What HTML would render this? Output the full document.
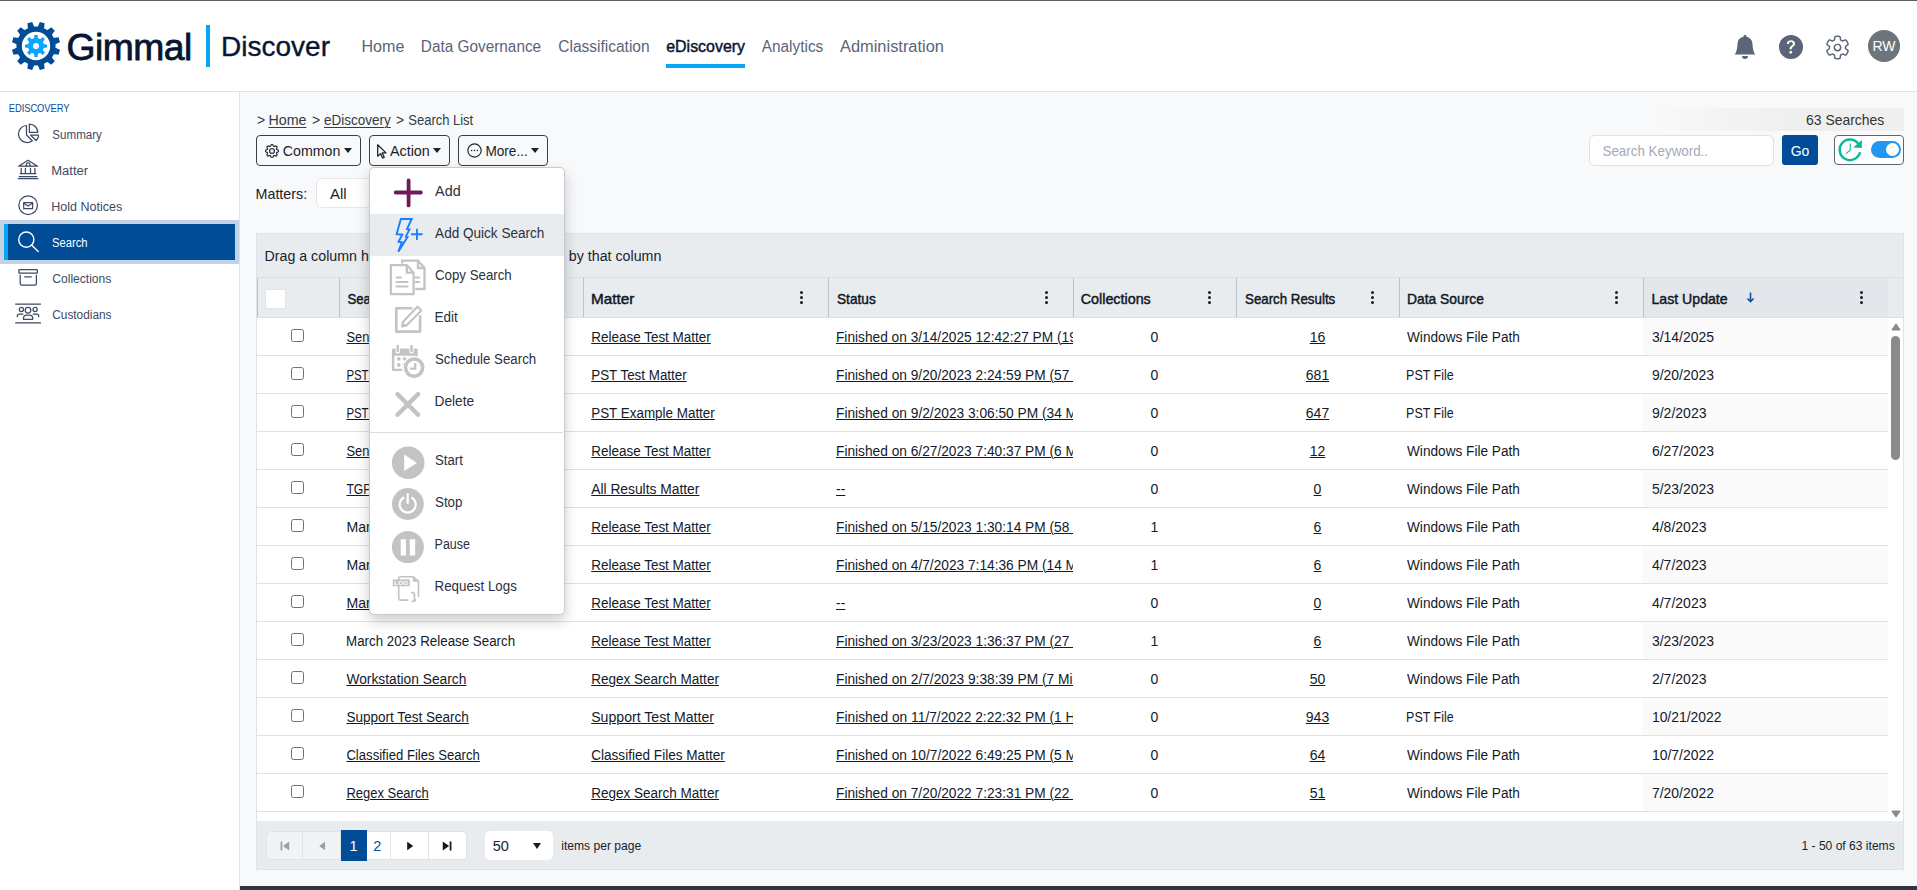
<!DOCTYPE html>
<html lang="en">
<head>
<meta charset="utf-8">
<title>Gimmal Discover - Search List</title>
<style>
*{box-sizing:border-box;}
html,body{margin:0;padding:0;}
body{width:1917px;height:890px;overflow:hidden;position:relative;background:#f8f9fa;font-family:"Liberation Sans","DejaVu Sans",sans-serif;color:#212529;font-size:14px;}
a{color:inherit;text-underline-offset:2px;text-decoration-thickness:1px;}
.abs{position:absolute;}
/* header */
#hdr{position:absolute;left:0;top:0;width:1917px;height:92px;background:#fff;border-top:1px solid #625a69;border-bottom:1px solid #dfe3e8;}
#gimmal{position:absolute;left:66px;top:22.9px;font-size:37.4px;line-height:48px;color:#081530;letter-spacing:-0.5px;-webkit-text-stroke:0.8px #081530;}
#bar{position:absolute;left:206px;top:25px;width:4px;height:42px;background:#0aa5f7;}
#discover{position:absolute;left:222px;top:28.8px;font-size:27px;line-height:36px;color:#0a1533;-webkit-text-stroke:0.35px #0a1533;}
.nav{position:absolute;top:37.4px;font-size:16px;line-height:20px;color:#5b6478;white-space:nowrap;}
.nav.act{color:#0a1533;-webkit-text-stroke:0.45px #0a1533;}
#navul{position:absolute;left:666px;top:64px;width:79px;height:4px;background:#0aa5f7;}
#avatar{position:absolute;left:1868px;top:30px;width:32px;height:32px;border-radius:16px;background:#6c757d;color:#fff;font-size:14px;line-height:32px;text-align:center;}
/* sidebar */
#side{position:absolute;left:0;top:92px;width:240px;height:798px;background:#fff;border-right:1px solid #dfe3e8;}
#side .ttl{position:absolute;left:8px;top:8.8px;font-size:11px;line-height:14px;color:#0b4d96;letter-spacing:-0.1px;}
.si{position:absolute;left:0;width:239px;height:36px;}
.si span{position:absolute;left:52px;top:11px;font-size:12.5px;line-height:16px;color:#3d4a63;white-space:nowrap;}
.si svg{position:absolute;left:17px;top:7px;width:22px;height:22px;}
#selo{position:absolute;left:0;top:128px;width:239px;height:44px;background:#c3d2e4;}
#seli{position:absolute;left:4px;top:132px;width:231px;height:36px;background:#004c97;border-left:4px solid #0aa5f7;}
/* main */
.bc{position:absolute;top:112px;font-size:14px;line-height:16px;color:#333b48;white-space:nowrap;}
.btn{position:absolute;top:135px;height:31px;border:1px solid #3a3f47;border-radius:4px;background:#f8f9fa;}
.btn span{position:absolute;top:6px;font-size:14px;line-height:18px;color:#1b212b;white-space:nowrap;}
.caret{position:absolute;top:12px;width:0;height:0;border-left:4px solid transparent;border-right:4px solid transparent;border-top:5px solid #1b212b;}
#cnt{position:absolute;left:1653px;top:108px;width:251px;height:23px;background:linear-gradient(90deg,rgba(239,239,239,0),#efefef 55%);}
#cnt span{position:absolute;right:20px;top:3px;font-size:15px;line-height:18px;color:#333;white-space:nowrap;}
#kw{position:absolute;left:1589px;top:135px;width:185px;height:31px;border:1px solid #dee2e6;border-radius:6px;background:#fff;}
#kw span{position:absolute;left:12px;top:7px;font-size:15px;line-height:16px;color:#a4abb5;white-space:nowrap;}
#go{position:absolute;left:1782px;top:135px;width:36px;height:30px;border-radius:3px;background:#004c97;color:#fff;font-size:14px;line-height:32px;text-align:center;}
#tg{position:absolute;left:1834px;top:135px;width:70px;height:30px;border:1px solid #5c6470;border-radius:4px;background:#fff;}
#sw{position:absolute;left:36px;top:5px;width:30px;height:17px;border-radius:8.5px;background:#2196f3;}
#sw i{position:absolute;right:1.8px;top:1.8px;width:13.4px;height:13.4px;border-radius:7px;background:#fff;}
#ml{position:absolute;left:256px;top:184.8px;font-size:15px;line-height:18px;color:#1b212b;}
#mdd{position:absolute;left:316px;top:178px;width:230px;height:30px;border:1px solid #e3e6ea;border-radius:6px;background:#fff;}
#mdd span{position:absolute;left:13px;top:6px;font-size:15px;line-height:18px;color:#1b212b;}
/* grid */
#grid{position:absolute;left:256px;top:233px;width:1648px;height:637px;background:#fff;border:1px solid #dfe2e6;}
#gp{position:absolute;left:0;top:0;width:1646px;height:44px;background:#e9ecef;border-bottom:1px solid #dcdfe3;}
#gp span{position:absolute;left:8px;top:13px;font-size:14px;line-height:18px;color:#1b212b;white-space:nowrap;}
#gh{position:absolute;left:0;top:44px;width:1646px;height:40px;background:#e9ecef;border-bottom:1px solid #dcdfe3;}
.th{position:absolute;top:0;height:39px;border-left:1px solid #bbc2cc;}
.th b{position:absolute;left:8px;top:12px;font-size:14.5px;line-height:18px;color:#0f1826;white-space:nowrap;font-weight:normal;-webkit-text-stroke:0.45px #0f1826;}
.kb{position:absolute;top:13px;width:4px;height:14px;}
.kb i{position:absolute;left:0;width:3px;height:3px;border-radius:2px;background:#161c26;}
#rows{position:absolute;left:0;top:84px;width:1631px;height:503px;overflow:hidden;}
.r{position:absolute;left:0;width:1631px;height:38px;border-bottom:1px solid #dfe2e6;background:#fff;}
.r .c{position:absolute;top:0;height:37px;overflow:hidden;white-space:nowrap;font-size:14px;line-height:18px;padding-top:10px;color:#121a2b;}
.r .c a,.r .c span{display:inline-block;}
.r .c a{text-decoration:underline;text-underline-offset:1.3px;text-decoration-thickness:1px;}
.r.alt .c7{background:#fafafa;}
.cb{position:absolute;left:34px;top:11px;width:13px;height:13px;border:1px solid #6e7178;border-radius:2.5px;background:#fff;}
.c1{left:82px;width:244px;padding-left:8px;}
.c2{left:326px;width:245px;padding-left:8px;}
.c3{left:571px;width:245px;padding-left:8px;}
.c4{left:816px;width:163px;text-align:center;}
.c5{left:979px;width:163px;text-align:center;}
.c6{left:1142px;width:244px;padding-left:8px;}
.c7{left:1386px;width:245px;padding-left:8px;}
#sb{position:absolute;left:1631px;top:84px;width:15px;height:503px;background:#fff;}
#sb .t{position:absolute;left:3px;top:18px;width:9px;height:124px;border-radius:4.5px;background:#8b8b8b;}
#sb svg{position:absolute;left:2.5px;width:10px;height:8px;}

#pg{position:absolute;left:0;top:587px;width:1646px;height:48px;background:#e9ecef;}
.pb{position:absolute;top:9px;height:30px;background:#fff;border-right:1px solid #dfe2e6;}
.pb.dis{background:#f1f3f5;}
#pg .t{position:absolute;font-size:13.5px;line-height:18px;color:#1b212b;white-space:nowrap;}
/* menu */
#menu{position:absolute;left:368.6px;top:166.6px;width:196.2px;height:448.2px;background:#fff;border:1px solid #c6c9cd;border-radius:5px;box-shadow:0 6px 14px rgba(0,0,0,.20);}
.mi{position:absolute;left:0;width:194.2px;height:42px;}
.mi span{position:absolute;left:64px;top:10px;font-size:14px;line-height:18px;color:#2a3140;white-space:nowrap;}
.mi svg{position:absolute;}
#foot{position:absolute;left:240px;top:886px;width:1677px;height:4px;background:#31353d;}
#hcb{position:absolute;left:7.3px;top:10.6px;width:20.4px;height:20.4px;border:1px solid #e0e3e7;border-radius:2px;background:#fff;}
</style>
</head>
<body>
<div id="hdr"></div>
<svg id="logo" viewBox="-25 -25 50 50" style="position:absolute;left:11px;top:21px;width:50px;height:50px"><g fill="#004c97"><path transform="rotate(15)" d="M-3.3 -18.5L-2.5 -24.1H2.5L3.3 -18.5z"/><path transform="rotate(45)" d="M-3.3 -18.5L-2.5 -24.1H2.5L3.3 -18.5z"/><path transform="rotate(75)" d="M-3.3 -18.5L-2.5 -24.1H2.5L3.3 -18.5z"/><path transform="rotate(105)" d="M-3.3 -18.5L-2.5 -24.1H2.5L3.3 -18.5z"/><path transform="rotate(135)" d="M-3.3 -18.5L-2.5 -24.1H2.5L3.3 -18.5z"/><path transform="rotate(165)" d="M-3.3 -18.5L-2.5 -24.1H2.5L3.3 -18.5z"/><path transform="rotate(195)" d="M-3.3 -18.5L-2.5 -24.1H2.5L3.3 -18.5z"/><path transform="rotate(225)" d="M-3.3 -18.5L-2.5 -24.1H2.5L3.3 -18.5z"/><path transform="rotate(255)" d="M-3.3 -18.5L-2.5 -24.1H2.5L3.3 -18.5z"/><path transform="rotate(285)" d="M-3.3 -18.5L-2.5 -24.1H2.5L3.3 -18.5z"/><path transform="rotate(315)" d="M-3.3 -18.5L-2.5 -24.1H2.5L3.3 -18.5z"/><path transform="rotate(345)" d="M-3.3 -18.5L-2.5 -24.1H2.5L3.3 -18.5z"/></g><circle r="16.9" fill="none" stroke="#004c97" stroke-width="5.4"/><g fill="#0aa5ff"><path transform="rotate(0)" d="M-2 -7L-1.6 -11H1.6L2 -7z"/><path transform="rotate(45)" d="M-2 -7L-1.6 -11H1.6L2 -7z"/><path transform="rotate(90)" d="M-2 -7L-1.6 -11H1.6L2 -7z"/><path transform="rotate(135)" d="M-2 -7L-1.6 -11H1.6L2 -7z"/><path transform="rotate(180)" d="M-2 -7L-1.6 -11H1.6L2 -7z"/><path transform="rotate(225)" d="M-2 -7L-1.6 -11H1.6L2 -7z"/><path transform="rotate(270)" d="M-2 -7L-1.6 -11H1.6L2 -7z"/><path transform="rotate(315)" d="M-2 -7L-1.6 -11H1.6L2 -7z"/></g><circle r="5.5" fill="none" stroke="#0aa5ff" stroke-width="5"/></svg>
<div id="gimmal" style="transform:translateX(0.50px) scaleX(0.9961);transform-origin:0 0;">Gimmal</div>
<div id="bar"></div>
<div id="discover" style="transform:translateX(-1.08px) scaleX(1.0385);transform-origin:0 0;">Discover</div>
<div class="nav" style="left:362px;transform:translateX(-0.51px) scaleX(1.0052);transform-origin:0 0;">Home</div>
<div class="nav" style="left:421px;transform:translateX(-0.21px) scaleX(0.9598);transform-origin:0 0;">Data Governance</div>
<div class="nav" style="left:558px;transform:translateX(0.25px) scaleX(0.9694);transform-origin:0 0;">Classification</div>
<div class="nav act" style="left:666px;transform:translateX(0.25px) scaleX(0.9952);transform-origin:0 0;">eDiscovery</div>
<div class="nav" style="left:761px;transform:translateX(0.75px) scaleX(0.9606);transform-origin:0 0;">Analytics</div>
<div class="nav" style="left:840px;transform:translateX(0.00px) scaleX(1.0251);transform-origin:0 0;">Administration</div>
<div id="navul"></div>
<svg viewBox="0 0 16 16" style="position:absolute;left:1733px;top:35px;width:24px;height:24px" fill="#5b6478"><path d="M8 16a2 2 0 0 0 2-2H6a2 2 0 0 0 2 2zm.995-14.901a1 1 0 1 0-1.99 0A5.002 5.002 0 0 0 3 6c0 1.098-.5 6-2 7h14c-1.5-1-2-5.902-2-7 0-2.42-1.72-4.44-4.005-4.901z"/></svg>
<svg viewBox="0 0 16 16" style="position:absolute;left:1779px;top:35px;width:24px;height:24px" fill="#5b6478"><path d="M16 8A8 8 0 1 1 0 8a8 8 0 0 1 16 0zM5.496 6.033h.825c.138 0 .248-.113.266-.25.09-.656.54-1.134 1.342-1.134.686 0 1.314.343 1.314 1.168 0 .635-.374.927-.965 1.371-.673.489-1.206 1.06-1.168 1.987l.003.217a.25.25 0 0 0 .25.246h.811a.25.25 0 0 0 .25-.25v-.105c0-.718.273-.927 1.01-1.486.609-.463 1.244-.977 1.244-2.056 0-1.511-1.276-2.241-2.673-2.241-1.267 0-2.655.59-2.75 2.286a.237.237 0 0 0 .241.247zm2.325 6.443c.61 0 1.029-.394 1.029-.927 0-.552-.42-.94-1.029-.94-.584 0-1.009.388-1.009.94 0 .533.425.927 1.01.927z"/></svg>
<svg viewBox="-12.5 -12.5 25 25" style="position:absolute;left:1824.5px;top:34.8px;width:25px;height:25px" fill="none" stroke="#5b6478" stroke-width="1.45" stroke-linejoin="round"><path d="M8.10 -0.00L8.10 -0.07L8.10 -0.14L8.10 -0.21L8.10 -0.28L8.09 -0.35L8.09 -0.42L8.08 -0.49L8.08 -0.57L8.08 -0.64L8.07 -0.71L8.06 -0.78L8.06 -0.85L8.05 -0.92L8.04 -0.99L8.05 -1.06L8.09 -1.14L8.15 -1.22L8.25 -1.31L8.36 -1.40L8.49 -1.50L8.64 -1.60L8.80 -1.71L8.97 -1.82L9.14 -1.94L9.32 -2.07L9.50 -2.19L9.68 -2.32L9.85 -2.45L10.01 -2.59L10.16 -2.72L10.29 -2.85L10.40 -2.98L10.50 -3.11L10.57 -3.23L10.62 -3.35L10.64 -3.46L10.62 -3.55L10.59 -3.65L10.56 -3.74L10.52 -3.83L10.49 -3.92L10.46 -4.01L10.42 -4.10L10.38 -4.20L10.35 -4.29L10.31 -4.38L10.27 -4.47L10.23 -4.56L10.19 -4.64L10.15 -4.73L10.11 -4.82L10.07 -4.91L10.02 -5.00L9.98 -5.08L9.93 -5.17L9.89 -5.26L9.84 -5.34L9.80 -5.43L9.75 -5.52L9.70 -5.60L9.65 -5.68L9.60 -5.77L9.55 -5.85L9.50 -5.94L9.45 -6.02L9.39 -6.10L9.34 -6.18L9.29 -6.26L9.23 -6.34L9.17 -6.42L9.12 -6.50L9.06 -6.58L9.00 -6.66L8.94 -6.74L8.89 -6.82L8.83 -6.90L8.77 -6.97L8.70 -7.05L8.64 -7.12L8.58 -7.20L8.52 -7.27L8.45 -7.35L8.39 -7.42L8.31 -7.48L8.21 -7.52L8.09 -7.54L7.94 -7.54L7.79 -7.52L7.62 -7.48L7.43 -7.43L7.24 -7.37L7.05 -7.30L6.85 -7.22L6.65 -7.13L6.45 -7.04L6.26 -6.95L6.06 -6.85L5.88 -6.77L5.71 -6.68L5.54 -6.61L5.39 -6.54L5.25 -6.49L5.13 -6.45L5.03 -6.44L4.94 -6.44L4.87 -6.47L4.82 -6.51L4.76 -6.55L4.70 -6.59L4.65 -6.64L4.59 -6.68L4.53 -6.72L4.47 -6.75L4.41 -6.79L4.35 -6.83L4.29 -6.87L4.23 -6.91L4.17 -6.94L4.11 -6.98L4.05 -7.01L3.99 -7.05L3.93 -7.08L3.86 -7.12L3.80 -7.15L3.74 -7.18L3.68 -7.22L3.61 -7.25L3.55 -7.28L3.49 -7.31L3.42 -7.34L3.36 -7.37L3.29 -7.40L3.23 -7.43L3.16 -7.46L3.11 -7.50L3.06 -7.57L3.02 -7.67L2.99 -7.79L2.97 -7.94L2.95 -8.10L2.93 -8.28L2.92 -8.48L2.90 -8.68L2.89 -8.89L2.87 -9.11L2.85 -9.32L2.83 -9.54L2.80 -9.75L2.76 -9.96L2.72 -10.16L2.67 -10.34L2.62 -10.50L2.56 -10.65L2.49 -10.77L2.41 -10.87L2.33 -10.94L2.23 -10.98L2.14 -10.99L2.04 -11.01L1.94 -11.03L1.85 -11.05L1.75 -11.06L1.66 -11.08L1.56 -11.09L1.46 -11.10L1.36 -11.12L1.27 -11.13L1.17 -11.14L1.07 -11.15L0.98 -11.16L0.88 -11.17L0.78 -11.17L0.68 -11.18L0.59 -11.18L0.49 -11.19L0.39 -11.19L0.29 -11.20L0.20 -11.20L0.10 -11.20L0.00 -11.20L-0.10 -11.20L-0.20 -11.20L-0.29 -11.20L-0.39 -11.19L-0.49 -11.19L-0.59 -11.18L-0.68 -11.18L-0.78 -11.17L-0.88 -11.17L-0.98 -11.16L-1.07 -11.15L-1.17 -11.14L-1.27 -11.13L-1.36 -11.12L-1.46 -11.10L-1.56 -11.09L-1.66 -11.08L-1.75 -11.06L-1.85 -11.05L-1.94 -11.03L-2.04 -11.01L-2.14 -10.99L-2.23 -10.98L-2.33 -10.94L-2.41 -10.87L-2.49 -10.77L-2.56 -10.65L-2.62 -10.50L-2.67 -10.34L-2.72 -10.16L-2.76 -9.96L-2.80 -9.75L-2.83 -9.54L-2.85 -9.32L-2.87 -9.11L-2.89 -8.89L-2.90 -8.68L-2.92 -8.48L-2.93 -8.28L-2.95 -8.10L-2.97 -7.94L-2.99 -7.79L-3.02 -7.67L-3.06 -7.57L-3.11 -7.50L-3.16 -7.46L-3.23 -7.43L-3.29 -7.40L-3.36 -7.37L-3.42 -7.34L-3.49 -7.31L-3.55 -7.28L-3.61 -7.25L-3.68 -7.22L-3.74 -7.18L-3.80 -7.15L-3.86 -7.12L-3.93 -7.08L-3.99 -7.05L-4.05 -7.01L-4.11 -6.98L-4.17 -6.94L-4.23 -6.91L-4.29 -6.87L-4.35 -6.83L-4.41 -6.79L-4.47 -6.75L-4.53 -6.72L-4.59 -6.68L-4.65 -6.64L-4.70 -6.59L-4.76 -6.55L-4.82 -6.51L-4.87 -6.47L-4.94 -6.44L-5.03 -6.44L-5.13 -6.45L-5.25 -6.49L-5.39 -6.54L-5.54 -6.61L-5.71 -6.68L-5.88 -6.77L-6.06 -6.85L-6.26 -6.95L-6.45 -7.04L-6.65 -7.13L-6.85 -7.22L-7.05 -7.30L-7.24 -7.37L-7.43 -7.43L-7.62 -7.48L-7.79 -7.52L-7.94 -7.54L-8.09 -7.54L-8.21 -7.52L-8.31 -7.48L-8.39 -7.42L-8.45 -7.35L-8.52 -7.27L-8.58 -7.20L-8.64 -7.12L-8.70 -7.05L-8.77 -6.97L-8.83 -6.90L-8.89 -6.82L-8.94 -6.74L-9.00 -6.66L-9.06 -6.58L-9.12 -6.50L-9.17 -6.42L-9.23 -6.34L-9.29 -6.26L-9.34 -6.18L-9.39 -6.10L-9.45 -6.02L-9.50 -5.94L-9.55 -5.85L-9.60 -5.77L-9.65 -5.68L-9.70 -5.60L-9.75 -5.52L-9.80 -5.43L-9.84 -5.34L-9.89 -5.26L-9.93 -5.17L-9.98 -5.08L-10.02 -5.00L-10.07 -4.91L-10.11 -4.82L-10.15 -4.73L-10.19 -4.64L-10.23 -4.56L-10.27 -4.47L-10.31 -4.38L-10.35 -4.29L-10.38 -4.20L-10.42 -4.10L-10.46 -4.01L-10.49 -3.92L-10.52 -3.83L-10.56 -3.74L-10.59 -3.65L-10.62 -3.55L-10.64 -3.46L-10.62 -3.35L-10.57 -3.23L-10.50 -3.11L-10.40 -2.98L-10.29 -2.85L-10.16 -2.72L-10.01 -2.59L-9.85 -2.45L-9.68 -2.32L-9.50 -2.19L-9.32 -2.07L-9.14 -1.94L-8.97 -1.82L-8.80 -1.71L-8.64 -1.60L-8.49 -1.50L-8.36 -1.40L-8.25 -1.31L-8.15 -1.22L-8.09 -1.14L-8.05 -1.06L-8.04 -0.99L-8.05 -0.92L-8.06 -0.85L-8.06 -0.78L-8.07 -0.71L-8.08 -0.64L-8.08 -0.57L-8.08 -0.49L-8.09 -0.42L-8.09 -0.35L-8.10 -0.28L-8.10 -0.21L-8.10 -0.14L-8.10 -0.07L-8.10 -0.00L-8.10 0.07L-8.10 0.14L-8.10 0.21L-8.10 0.28L-8.09 0.35L-8.09 0.42L-8.08 0.49L-8.08 0.57L-8.08 0.64L-8.07 0.71L-8.06 0.78L-8.06 0.85L-8.05 0.92L-8.04 0.99L-8.05 1.06L-8.09 1.14L-8.15 1.22L-8.25 1.31L-8.36 1.40L-8.49 1.50L-8.64 1.60L-8.80 1.71L-8.97 1.82L-9.14 1.94L-9.32 2.07L-9.50 2.19L-9.68 2.32L-9.85 2.45L-10.01 2.59L-10.16 2.72L-10.29 2.85L-10.40 2.98L-10.50 3.11L-10.57 3.23L-10.62 3.35L-10.64 3.46L-10.62 3.55L-10.59 3.65L-10.56 3.74L-10.52 3.83L-10.49 3.92L-10.46 4.01L-10.42 4.10L-10.38 4.20L-10.35 4.29L-10.31 4.38L-10.27 4.47L-10.23 4.56L-10.19 4.64L-10.15 4.73L-10.11 4.82L-10.07 4.91L-10.02 5.00L-9.98 5.08L-9.93 5.17L-9.89 5.26L-9.84 5.34L-9.80 5.43L-9.75 5.52L-9.70 5.60L-9.65 5.68L-9.60 5.77L-9.55 5.85L-9.50 5.94L-9.45 6.02L-9.39 6.10L-9.34 6.18L-9.29 6.26L-9.23 6.34L-9.17 6.42L-9.12 6.50L-9.06 6.58L-9.00 6.66L-8.94 6.74L-8.89 6.82L-8.83 6.90L-8.77 6.97L-8.70 7.05L-8.64 7.12L-8.58 7.20L-8.52 7.27L-8.45 7.35L-8.39 7.42L-8.31 7.48L-8.21 7.52L-8.09 7.54L-7.94 7.54L-7.79 7.52L-7.62 7.48L-7.43 7.43L-7.24 7.37L-7.05 7.30L-6.85 7.22L-6.65 7.13L-6.45 7.04L-6.26 6.95L-6.06 6.85L-5.88 6.77L-5.71 6.68L-5.54 6.61L-5.39 6.54L-5.25 6.49L-5.13 6.45L-5.03 6.44L-4.94 6.44L-4.87 6.47L-4.82 6.51L-4.76 6.55L-4.70 6.59L-4.65 6.64L-4.59 6.68L-4.53 6.72L-4.47 6.75L-4.41 6.79L-4.35 6.83L-4.29 6.87L-4.23 6.91L-4.17 6.94L-4.11 6.98L-4.05 7.01L-3.99 7.05L-3.93 7.08L-3.86 7.12L-3.80 7.15L-3.74 7.18L-3.68 7.22L-3.61 7.25L-3.55 7.28L-3.49 7.31L-3.42 7.34L-3.36 7.37L-3.29 7.40L-3.23 7.43L-3.16 7.46L-3.11 7.50L-3.06 7.57L-3.02 7.67L-2.99 7.79L-2.97 7.94L-2.95 8.10L-2.93 8.28L-2.92 8.48L-2.90 8.68L-2.89 8.89L-2.87 9.11L-2.85 9.32L-2.83 9.54L-2.80 9.75L-2.76 9.96L-2.72 10.16L-2.67 10.34L-2.62 10.50L-2.56 10.65L-2.49 10.77L-2.41 10.87L-2.33 10.94L-2.23 10.98L-2.14 10.99L-2.04 11.01L-1.94 11.03L-1.85 11.05L-1.75 11.06L-1.66 11.08L-1.56 11.09L-1.46 11.10L-1.36 11.12L-1.27 11.13L-1.17 11.14L-1.07 11.15L-0.98 11.16L-0.88 11.17L-0.78 11.17L-0.68 11.18L-0.59 11.18L-0.49 11.19L-0.39 11.19L-0.29 11.20L-0.20 11.20L-0.10 11.20L-0.00 11.20L0.10 11.20L0.20 11.20L0.29 11.20L0.39 11.19L0.49 11.19L0.59 11.18L0.68 11.18L0.78 11.17L0.88 11.17L0.98 11.16L1.07 11.15L1.17 11.14L1.27 11.13L1.36 11.12L1.46 11.10L1.56 11.09L1.66 11.08L1.75 11.06L1.85 11.05L1.94 11.03L2.04 11.01L2.14 10.99L2.23 10.98L2.33 10.94L2.41 10.87L2.49 10.77L2.56 10.65L2.62 10.50L2.67 10.34L2.72 10.16L2.76 9.96L2.80 9.75L2.83 9.54L2.85 9.32L2.87 9.11L2.89 8.89L2.90 8.68L2.92 8.48L2.93 8.28L2.95 8.10L2.97 7.94L2.99 7.79L3.02 7.67L3.06 7.57L3.11 7.50L3.16 7.46L3.23 7.43L3.29 7.40L3.36 7.37L3.42 7.34L3.49 7.31L3.55 7.28L3.61 7.25L3.68 7.22L3.74 7.18L3.80 7.15L3.86 7.12L3.93 7.08L3.99 7.05L4.05 7.01L4.11 6.98L4.17 6.94L4.23 6.91L4.29 6.87L4.35 6.83L4.41 6.79L4.47 6.75L4.53 6.72L4.59 6.68L4.65 6.64L4.70 6.59L4.76 6.55L4.82 6.51L4.87 6.47L4.94 6.44L5.03 6.44L5.13 6.45L5.25 6.49L5.39 6.54L5.54 6.61L5.71 6.68L5.88 6.77L6.06 6.85L6.26 6.95L6.45 7.04L6.65 7.13L6.85 7.22L7.05 7.30L7.24 7.37L7.43 7.43L7.62 7.48L7.79 7.52L7.94 7.54L8.09 7.54L8.21 7.52L8.31 7.48L8.39 7.42L8.45 7.35L8.52 7.27L8.58 7.20L8.64 7.12L8.70 7.05L8.77 6.97L8.83 6.90L8.89 6.82L8.94 6.74L9.00 6.66L9.06 6.58L9.12 6.50L9.17 6.42L9.23 6.34L9.29 6.26L9.34 6.18L9.39 6.10L9.45 6.02L9.50 5.94L9.55 5.85L9.60 5.77L9.65 5.68L9.70 5.60L9.75 5.52L9.80 5.43L9.84 5.34L9.89 5.26L9.93 5.17L9.98 5.08L10.02 5.00L10.07 4.91L10.11 4.82L10.15 4.73L10.19 4.64L10.23 4.56L10.27 4.47L10.31 4.38L10.35 4.29L10.38 4.20L10.42 4.10L10.46 4.01L10.49 3.92L10.52 3.83L10.56 3.74L10.59 3.65L10.62 3.55L10.64 3.46L10.62 3.35L10.57 3.23L10.50 3.11L10.40 2.98L10.29 2.85L10.16 2.72L10.01 2.59L9.85 2.45L9.68 2.32L9.50 2.19L9.32 2.07L9.14 1.94L8.97 1.82L8.80 1.71L8.64 1.60L8.49 1.50L8.36 1.40L8.25 1.31L8.15 1.22L8.09 1.14L8.05 1.06L8.04 0.99L8.05 0.92L8.06 0.85L8.06 0.78L8.07 0.71L8.08 0.64L8.08 0.57L8.08 0.49L8.09 0.42L8.09 0.35L8.10 0.28L8.10 0.21L8.10 0.14L8.10 0.07Z"/><circle r="3.15"/></svg>
<div id="avatar">RW</div>

<div id="side">
  <div class="ttl" style="transform:translateX(0.80px) scaleX(0.8550);transform-origin:0 0;">EDISCOVERY</div>
  <div id="selo"></div><div id="seli"></div>
  <div class="si" style="top:24px"><svg viewBox="0 0 22 22" fill="none" stroke="#3d4a63" stroke-width="1.25" stroke-linejoin="round" stroke-linecap="round"><path d="M9.5 2.5A8.5 8.5 0 1 0 15.3 17.7L9.5 12Z"/><path d="M12.4 9.3V1.1A8.3 8.3 0 0 1 20.8 9.3Z"/><path d="M13.7 12.2H21.7A8.5 8.5 0 0 1 19.1 17.5Z"/></svg><span style="transform:translateX(0.30px) scaleX(0.9275);transform-origin:0 0;">Summary</span></div>
  <div class="si" style="top:60px"><svg viewBox="0 0 22 22" fill="none" stroke="#3d4a63" stroke-width="1.25" stroke-linejoin="round" stroke-linecap="round"><path d="M1.6 7.2L11 1.3L20.6 7.2Z"/><path d="M9.3 7.2V5.7A1.85 1.85 0 0 1 13 5.7V7.2"/><path d="M4.2 9.3V14.3M8.4 9.3V14.3M13.5 9.3V14.3M17.9 9.3V14.3M3.2 14.6H18.9M2.3 17.5H19.8M1.3 19.6H21"/></svg><span style="transform:translateX(-0.74px) scaleX(1.0420);transform-origin:0 0;">Matter</span></div>
  <div class="si" style="top:96px"><svg viewBox="0 0 22 22" fill="none" stroke="#3d4a63" stroke-width="1.25" stroke-linejoin="round" stroke-linecap="round"><circle cx="11.15" cy="10.2" r="9.3"/><rect x="6.7" y="7.6" width="8.9" height="5.9"/><path d="M6.9 8.2L11.1 11L15.4 8.2"/></svg><span style="transform:translateX(-0.70px) scaleX(0.9998);transform-origin:0 0;">Hold Notices</span></div>
  <div class="si" style="top:132px"><svg viewBox="0 0 22 22" fill="none" stroke="#fff" stroke-width="1.4" stroke-linejoin="round" stroke-linecap="round"><circle cx="9.3" cy="8.6" r="7.6"/><path d="M14.8 14.3L21.2 20.5"/></svg><span style="color:#fff;transform:translateX(0.10px) scaleX(0.8952);transform-origin:0 0;">Search</span></div>
  <div class="si" style="top:168px"><svg viewBox="0 0 22 22" fill="none" stroke="#3d4a63" stroke-width="1.25" stroke-linejoin="round" stroke-linecap="round"><rect x="1.9" y="2.6" width="18.5" height="3.6" rx="0.6"/><path d="M3.2 8.2V16.6a1.6 1.6 0 0 0 1.6 1.6H17.8a1.6 1.6 0 0 0 1.6 -1.6V8.2M7.8 9.9H14.3"/></svg><span style="transform:translateX(0.30px) scaleX(0.9641);transform-origin:0 0;">Collections</span></div>
  <div class="si" style="top:204px"><svg viewBox="0 0 28 22" style="left:14px;width:28px" fill="none" stroke="#3d4a63" stroke-width="1.25" stroke-linejoin="round" stroke-linecap="round"><path d="M1.6 1.1H26.5M1.6 19.8H26.5"/><circle cx="7.4" cy="6.5" r="2.1"/><circle cx="14" cy="7.2" r="2.8"/><circle cx="21.1" cy="6.5" r="2.1"/><path d="M3.3 13.7v-0.7a2 2 0 0 1 2-2H8.9M19.2 11H22.7a2 2 0 0 1 2 2v0.7"/><path d="M9.5 16.3v-1.2a2.9 2.9 0 0 1 2.9-2.9h3.4a2.9 2.9 0 0 1 2.9 2.9v1.2z"/></svg><span style="transform:translateX(0.30px) scaleX(0.9456);transform-origin:0 0;">Custodians</span></div>
</div>

<div class="bc" style="left:257px">&gt;</div>
<div class="bc" style="left:269px;transform:translateX(-0.52px) scaleX(1.0175);transform-origin:0 0;"><a href="#">Home</a></div>
<div class="bc" style="left:312px">&gt;</div>
<div class="bc" style="left:324px;transform:translateX(0.00px) scaleX(0.9647);transform-origin:0 0;"><a href="#">eDiscovery</a></div>
<div class="bc" style="left:396px">&gt;</div>
<div class="bc" style="left:408px;transform:translateX(0.30px) scaleX(0.9267);transform-origin:0 0;">Search List</div>

<div class="btn" style="left:256px;width:105px"><svg viewBox="0 0 16 16" style="position:absolute;left:8px;top:7.5px;width:14px;height:14px" fill="#1b212b" stroke="#1b212b" stroke-width="0.35"><path d="M8 4.754a3.246 3.246 0 1 0 0 6.492 3.246 3.246 0 0 0 0-6.492zM5.754 8a2.246 2.246 0 1 1 4.492 0 2.246 2.246 0 0 1-4.492 0z"/><path d="M9.796 1.343c-.527-1.79-3.065-1.79-3.592 0l-.094.319a.873.873 0 0 1-1.255.52l-.292-.16c-1.64-.892-3.433.902-2.54 2.541l.159.292a.873.873 0 0 1-.52 1.255l-.319.094c-1.79.527-1.79 3.065 0 3.592l.319.094a.873.873 0 0 1 .52 1.255l-.16.292c-.892 1.64.901 3.434 2.541 2.54l.292-.159a.873.873 0 0 1 1.255.52l.094.319c.527 1.79 3.065 1.79 3.592 0l.094-.319a.873.873 0 0 1 1.255-.52l.292.16c1.64.893 3.434-.902 2.54-2.541l-.159-.292a.873.873 0 0 1 .52-1.255l.319-.094c1.79-.527 1.79-3.065 0-3.592l-.319-.094a.873.873 0 0 1-.52-1.255l.16-.292c.893-1.64-.902-3.433-2.541-2.54l-.292.159a.873.873 0 0 1-1.255-.52l-.094-.319zm-2.633.283c.246-.835 1.428-.835 1.674 0l.094.319a1.873 1.873 0 0 0 2.693 1.115l.291-.16c.764-.415 1.6.42 1.184 1.185l-.159.292a1.873 1.873 0 0 0 1.116 2.692l.318.094c.835.246.835 1.428 0 1.674l-.319.094a1.873 1.873 0 0 0-1.115 2.693l.16.291c.415.764-.42 1.6-1.185 1.184l-.291-.159a1.873 1.873 0 0 0-2.693 1.116l-.094.318c-.246.835-1.428.835-1.674 0l-.094-.319a1.873 1.873 0 0 0-2.692-1.115l-.292.16c-.764.415-1.6-.42-1.184-1.185l.159-.291A1.873 1.873 0 0 0 1.945 8.93l-.319-.094c-.835-.246-.835-1.428 0-1.674l.319-.094A1.873 1.873 0 0 0 3.06 4.377l-.16-.292c-.415-.764.42-1.6 1.185-1.184l.292.159a1.873 1.873 0 0 0 2.692-1.115l.094-.319z"/></svg><span style="left:26px;transform:translateX(-0.20px) scaleX(1.0124);transform-origin:0 0;">Common</span><i class="caret" style="left:87px"></i></div>
<div class="btn" style="left:369px;width:81px"><svg viewBox="0 0 10 15" style="position:absolute;left:7px;top:7.5px;width:10px;height:15px" fill="none" stroke="#1b212b" stroke-width="1.25" stroke-linejoin="round"><path d="M0.7 0.8V12.2L3.5 9.6L5.6 14.1L7.3 13.3L5.2 8.9H9Z"/></svg><span style="left:20px;transform:translateX(0.00px) scaleX(1.0230);transform-origin:0 0;">Action</span><i class="caret" style="left:63px"></i></div>
<div class="btn" style="left:458px;width:90px"><svg viewBox="0 0 16 16" style="position:absolute;left:8.3px;top:7.3px;width:15px;height:15px"><circle cx="8" cy="8" r="7.1" fill="none" stroke="#1b212b" stroke-width="1.2"/><g fill="#1b212b"><circle cx="5" cy="8" r="0.8"/><circle cx="8" cy="8" r="0.8"/><circle cx="11" cy="8" r="0.8"/></g></svg><span style="left:27px;transform:translateX(-0.57px) scaleX(0.9718);transform-origin:0 0;">More...</span><i class="caret" style="left:72px"></i></div>

<div id="cnt"><span style="transform:translateX(6.03px) scaleX(0.9293);transform-origin:0 0;">63 Searches</span></div>
<div id="kw"><span style="transform:translateX(0.50px) scaleX(0.8915);transform-origin:0 0;">Search Keyword..</span></div>
<div id="go">Go</div>
<div id="tg"><svg viewBox="1835 136 68 28" style="position:absolute;left:0;top:0;width:68px;height:28px"><path d="M1858.12 143.46A10.3 10.3 0 1 0 1859.99 152.29" fill="none" stroke="#0bb89b" stroke-width="2.5"/><path d="M1861.9 140V147.9L1853.2 147.4Z" fill="#0bb89b"/><path d="M1850.2 143.4V150.3L1846 153.6" fill="none" stroke="#0bb89b" stroke-width="1.1"/></svg><div id="sw"><i></i></div></div>

<div id="ml" style="transform:translateX(-0.45px) scaleX(0.9517);transform-origin:0 0;">Matters:</div>
<div id="mdd"><span>All</span></div>

<div id="grid">
  <div id="gp"><span style="transform:translateX(-0.52px) scaleX(1.0157);transform-origin:0 0;">Drag a column header and drop it here to group by that column</span></div>
  <div id="gh"><div class="th" style="left:0;width:82px;border-left:1px solid #bbc2cc"><div id="hcb"></div></div><div class="th" style="left:82px;width:244px"><b style="transform:translateX(-0.50px) scaleX(0.9087);transform-origin:0 0;">Search Name</b><div class="kb" style="left:215px"><i style="top:0"></i><i style="top:5px"></i><i style="top:10px"></i></div></div><div class="th" style="left:326px;width:245px"><b style="transform:translateX(-1.06px) scaleX(1.0555);transform-origin:0 0;">Matter</b><div class="kb" style="left:216px"><i style="top:0"></i><i style="top:5px"></i><i style="top:10px"></i></div></div><div class="th" style="left:571px;width:245px"><b style="transform:translateX(0.00px) scaleX(0.9423);transform-origin:0 0;">Status</b><div class="kb" style="left:216px"><i style="top:0"></i><i style="top:5px"></i><i style="top:10px"></i></div></div><div class="th" style="left:816px;width:163px"><b style="transform:translateX(-1.25px) scaleX(0.9870);transform-origin:0 0;">Collections</b><div class="kb" style="left:134px"><i style="top:0"></i><i style="top:5px"></i><i style="top:10px"></i></div></div><div class="th" style="left:979px;width:163px"><b style="transform:translateX(0.00px) scaleX(0.9177);transform-origin:0 0;">Search Results</b><div class="kb" style="left:134px"><i style="top:0"></i><i style="top:5px"></i><i style="top:10px"></i></div></div><div class="th" style="left:1142px;width:244px"><b style="transform:translateX(-0.95px) scaleX(0.9524);transform-origin:0 0;">Data Source</b><div class="kb" style="left:215px"><i style="top:0"></i><i style="top:5px"></i><i style="top:10px"></i></div></div><div class="th" style="left:1386px;width:245px;background:#e3e6eb"><b style="transform:translateX(-0.58px) scaleX(0.9750);transform-origin:0 0;">Last Update</b><svg class="sort" viewBox="0 0 10 12" style="position:absolute;left:102px;top:14px;width:9px;height:11px"><path d="M5 0.5v10M1.6 7.2L5 10.6 8.4 7.2" fill="none" stroke="#0b4d96" stroke-width="1.7"/></svg><div class="kb" style="left:216px"><i style="top:0"></i><i style="top:5px"></i><i style="top:10px"></i></div></div></div>
  <div id="rows">
<div class="r alt" style="top:0px"><i class="cb"></i><div class="c c1"><a href="#" style="transform:translateX(-0.60px) scaleX(0.9202);transform-origin:0 0;">Sensitive Data Search</a></div><div class="c c2"><a href="#" style="transform:translateX(0.20px) scaleX(0.9626);transform-origin:0 0;">Release Test Matter</a></div><div class="c c3"><a href="#" style="transform:translateX(0.00px) scaleX(0.9789);transform-origin:0 0;">Finished on 3/14/2025 12:42:27 PM (19 Minutes)</a></div><div class="c c4">0</div><div class="c c5"><a href="#">16</a></div><div class="c c6"><span style="transform:translateX(0.00px) scaleX(0.9736);transform-origin:0 0;">Windows File Path</span></div><div class="c c7"><span style="transform:translateX(0.90px) scaleX(0.9969);transform-origin:0 0;">3/14/2025</span></div></div>
<div class="r" style="top:38px"><i class="cb"></i><div class="c c1"><a href="#" style="transform:translateX(-0.60px) scaleX(0.8130);transform-origin:0 0;">PST Test Search</a></div><div class="c c2"><a href="#" style="transform:translateX(0.20px) scaleX(0.9563);transform-origin:0 0;">PST Test Matter</a></div><div class="c c3"><a href="#" style="transform:translateX(0.00px) scaleX(0.9795);transform-origin:0 0;">Finished on 9/20/2023 2:24:59 PM (57 Minutes)</a></div><div class="c c4">0</div><div class="c c5"><a href="#">681</a></div><div class="c c6"><span style="transform:translateX(-0.89px) scaleX(0.8886);transform-origin:0 0;">PST File</span></div><div class="c c7"><span style="transform:translateX(0.90px) scaleX(0.9969);transform-origin:0 0;">9/20/2023</span></div></div>
<div class="r alt" style="top:76px"><i class="cb"></i><div class="c c1"><a href="#" style="transform:translateX(-0.60px) scaleX(0.8130);transform-origin:0 0;">PST Example Search</a></div><div class="c c2"><a href="#" style="transform:translateX(0.20px) scaleX(0.9588);transform-origin:0 0;">PST Example Matter</a></div><div class="c c3"><a href="#" style="transform:translateX(0.00px) scaleX(0.9801);transform-origin:0 0;">Finished on 9/2/2023 3:06:50 PM (34 Minutes)</a></div><div class="c c4">0</div><div class="c c5"><a href="#">647</a></div><div class="c c6"><span style="transform:translateX(-0.89px) scaleX(0.8886);transform-origin:0 0;">PST File</span></div><div class="c c7"><span style="transform:translateX(0.90px) scaleX(1.0016);transform-origin:0 0;">9/2/2023</span></div></div>
<div class="r" style="top:114px"><i class="cb"></i><div class="c c1"><a href="#" style="transform:translateX(-0.60px) scaleX(0.9202);transform-origin:0 0;">Sensitive Files Search</a></div><div class="c c2"><a href="#" style="transform:translateX(0.20px) scaleX(0.9626);transform-origin:0 0;">Release Test Matter</a></div><div class="c c3"><a href="#" style="transform:translateX(0.00px) scaleX(0.9795);transform-origin:0 0;">Finished on 6/27/2023 7:40:37 PM (6 Minutes)</a></div><div class="c c4">0</div><div class="c c5"><a href="#">12</a></div><div class="c c6"><span style="transform:translateX(0.00px) scaleX(0.9736);transform-origin:0 0;">Windows File Path</span></div><div class="c c7"><span style="transform:translateX(0.90px) scaleX(0.9969);transform-origin:0 0;">6/27/2023</span></div></div>
<div class="r alt" style="top:152px"><i class="cb"></i><div class="c c1"><a href="#" style="transform:translateX(-0.60px) scaleX(0.8649);transform-origin:0 0;">TGP All Results Search</a></div><div class="c c2"><a href="#" style="transform:translateX(0.20px) scaleX(0.9863);transform-origin:0 0;">All Results Matter</a></div><div class="c c3"><a href="#">--</a></div><div class="c c4">0</div><div class="c c5"><a href="#">0</a></div><div class="c c6"><span style="transform:translateX(0.00px) scaleX(0.9736);transform-origin:0 0;">Windows File Path</span></div><div class="c c7"><span style="transform:translateX(0.90px) scaleX(0.9969);transform-origin:0 0;">5/23/2023</span></div></div>
<div class="r" style="top:190px"><i class="cb"></i><div class="c c1"><span style="transform:translateX(-0.60px) scaleX(1.0062);transform-origin:0 0;">March 2023 Release Search 3</span></div><div class="c c2"><a href="#" style="transform:translateX(0.20px) scaleX(0.9626);transform-origin:0 0;">Release Test Matter</a></div><div class="c c3"><a href="#" style="transform:translateX(0.00px) scaleX(0.9795);transform-origin:0 0;">Finished on 5/15/2023 1:30:14 PM (58 Minutes)</a></div><div class="c c4">1</div><div class="c c5"><a href="#">6</a></div><div class="c c6"><span style="transform:translateX(0.00px) scaleX(0.9736);transform-origin:0 0;">Windows File Path</span></div><div class="c c7"><span style="transform:translateX(0.90px) scaleX(1.0016);transform-origin:0 0;">4/8/2023</span></div></div>
<div class="r alt" style="top:228px"><i class="cb"></i><div class="c c1"><span style="transform:translateX(-0.60px) scaleX(1.0062);transform-origin:0 0;">March 2023 Release Search 2</span></div><div class="c c2"><a href="#" style="transform:translateX(0.20px) scaleX(0.9626);transform-origin:0 0;">Release Test Matter</a></div><div class="c c3"><a href="#" style="transform:translateX(0.00px) scaleX(0.9801);transform-origin:0 0;">Finished on 4/7/2023 7:14:36 PM (14 Minutes)</a></div><div class="c c4">1</div><div class="c c5"><a href="#">6</a></div><div class="c c6"><span style="transform:translateX(0.00px) scaleX(0.9736);transform-origin:0 0;">Windows File Path</span></div><div class="c c7"><span style="transform:translateX(0.90px) scaleX(1.0016);transform-origin:0 0;">4/7/2023</span></div></div>
<div class="r" style="top:266px"><i class="cb"></i><div class="c c1"><a href="#" style="transform:translateX(-0.60px) scaleX(1.0062);transform-origin:0 0;">March 2023 Release Copy</a></div><div class="c c2"><a href="#" style="transform:translateX(0.20px) scaleX(0.9626);transform-origin:0 0;">Release Test Matter</a></div><div class="c c3"><a href="#">--</a></div><div class="c c4">0</div><div class="c c5"><a href="#">0</a></div><div class="c c6"><span style="transform:translateX(0.00px) scaleX(0.9736);transform-origin:0 0;">Windows File Path</span></div><div class="c c7"><span style="transform:translateX(0.90px) scaleX(1.0016);transform-origin:0 0;">4/7/2023</span></div></div>
<div class="r alt" style="top:304px"><i class="cb"></i><div class="c c1"><span style="transform:translateX(-0.95px) scaleX(0.9530);transform-origin:0 0;">March 2023 Release Search</span></div><div class="c c2"><a href="#" style="transform:translateX(0.20px) scaleX(0.9626);transform-origin:0 0;">Release Test Matter</a></div><div class="c c3"><a href="#" style="transform:translateX(0.00px) scaleX(0.9795);transform-origin:0 0;">Finished on 3/23/2023 1:36:37 PM (27 Minutes)</a></div><div class="c c4">1</div><div class="c c5"><a href="#">6</a></div><div class="c c6"><span style="transform:translateX(0.00px) scaleX(0.9736);transform-origin:0 0;">Windows File Path</span></div><div class="c c7"><span style="transform:translateX(0.90px) scaleX(0.9969);transform-origin:0 0;">3/23/2023</span></div></div>
<div class="r" style="top:342px"><i class="cb"></i><div class="c c1"><a href="#" style="transform:translateX(-0.60px) scaleX(0.9844);transform-origin:0 0;">Workstation Search</a></div><div class="c c2"><a href="#" style="transform:translateX(0.20px) scaleX(0.9653);transform-origin:0 0;">Regex Search Matter</a></div><div class="c c3"><a href="#" style="transform:translateX(0.00px) scaleX(0.9801);transform-origin:0 0;">Finished on 2/7/2023 9:38:39 PM (7 Minutes)</a></div><div class="c c4">0</div><div class="c c5"><a href="#">50</a></div><div class="c c6"><span style="transform:translateX(0.00px) scaleX(0.9736);transform-origin:0 0;">Windows File Path</span></div><div class="c c7"><span style="transform:translateX(0.90px) scaleX(1.0016);transform-origin:0 0;">2/7/2023</span></div></div>
<div class="r alt" style="top:380px"><i class="cb"></i><div class="c c1"><a href="#" style="transform:translateX(-0.60px) scaleX(0.9675);transform-origin:0 0;">Support Test Search</a></div><div class="c c2"><a href="#" style="transform:translateX(0.20px) scaleX(1.0072);transform-origin:0 0;">Support Test Matter</a></div><div class="c c3"><a href="#" style="transform:translateX(0.00px) scaleX(0.9843);transform-origin:0 0;">Finished on 11/7/2022 2:22:32 PM (1 Hour)</a></div><div class="c c4">0</div><div class="c c5"><a href="#">943</a></div><div class="c c6"><span style="transform:translateX(-0.89px) scaleX(0.8886);transform-origin:0 0;">PST File</span></div><div class="c c7"><span style="transform:translateX(0.91px) scaleX(0.9930);transform-origin:0 0;">10/21/2022</span></div></div>
<div class="r" style="top:418px"><i class="cb"></i><div class="c c1"><a href="#" style="transform:translateX(-0.60px) scaleX(0.9369);transform-origin:0 0;">Classified Files Search</a></div><div class="c c2"><a href="#" style="transform:translateX(0.20px) scaleX(0.9702);transform-origin:0 0;">Classified Files Matter</a></div><div class="c c3"><a href="#" style="transform:translateX(0.00px) scaleX(0.9795);transform-origin:0 0;">Finished on 10/7/2022 6:49:25 PM (5 Minutes)</a></div><div class="c c4">0</div><div class="c c5"><a href="#">64</a></div><div class="c c6"><span style="transform:translateX(0.00px) scaleX(0.9736);transform-origin:0 0;">Windows File Path</span></div><div class="c c7"><span style="transform:translateX(0.90px) scaleX(0.9968);transform-origin:0 0;">10/7/2022</span></div></div>
<div class="r alt" style="top:456px"><i class="cb"></i><div class="c c1"><a href="#" style="transform:translateX(-0.60px) scaleX(0.9265);transform-origin:0 0;">Regex Search</a></div><div class="c c2"><a href="#" style="transform:translateX(0.20px) scaleX(0.9653);transform-origin:0 0;">Regex Search Matter</a></div><div class="c c3"><a href="#" style="transform:translateX(0.00px) scaleX(0.9795);transform-origin:0 0;">Finished on 7/20/2022 7:23:31 PM (22 Minutes)</a></div><div class="c c4">0</div><div class="c c5"><a href="#">51</a></div><div class="c c6"><span style="transform:translateX(0.00px) scaleX(0.9736);transform-origin:0 0;">Windows File Path</span></div><div class="c c7"><span style="transform:translateX(0.90px) scaleX(0.9969);transform-origin:0 0;">7/20/2022</span></div></div>
<div class="r" style="top:494px"><i class="cb"></i><div class="c c1"><a href="#" style="transform:translateX(-0.60px) scaleX(0.7793);transform-origin:0 0;">Email Search</a></div><div class="c c2"><a href="#">Email Matter</a></div><div class="c c3"><a href="#">--</a></div><div class="c c4">0</div><div class="c c5"><a href="#">0</a></div><div class="c c6"><span style="transform:translateX(0.00px) scaleX(0.9736);transform-origin:0 0;">Windows File Path</span></div><div class="c c7"><span style="transform:translateX(0.90px) scaleX(0.9969);transform-origin:0 0;">7/19/2022</span></div></div>
</div>
  <div id="sb"><svg viewBox="0 0 10 8" style="top:4.6px"><path d="M5 1.3L8.7 6.7H1.3Z" fill="#8b8b8b" stroke="#8b8b8b" stroke-width="1.4" stroke-linejoin="round"/></svg><i class="t"></i><svg viewBox="0 0 10 8" style="top:491.5px"><path d="M1.3 1.3H8.7L5 6.7Z" fill="#8b8b8b" stroke="#8b8b8b" stroke-width="1.4" stroke-linejoin="round"/></svg></div>
  <div id="pg"><div class="pb dis" style="top:9.7px;height:29.4px;left:8.7px;width:37.6px;border-radius:5px 0 0 5px;border-left:1px solid #dfe2e6;border-top:1px solid #dfe2e6;border-bottom:1px solid #dfe2e6;"><svg viewBox="0 0 12 12" style="position:absolute;left:11.5px;top:7.2px;width:14px;height:14px"><path d="M2.2 2.2h1.5v7.6H2.2zM9.6 2.2v7.6L4.2 6z" fill="#9a9fa8"/></svg></div><div class="pb dis" style="top:9.7px;height:29.4px;left:46.3px;width:37.7px;border-top:1px solid #dfe2e6;border-bottom:1px solid #dfe2e6;"><svg viewBox="0 0 12 12" style="position:absolute;left:11.5px;top:7.2px;width:14px;height:14px"><path d="M8.6 2.4v7.2L3.6 6z" fill="#9a9fa8"/></svg></div><div class="pb" style="left:84px;width:25.8px;top:8.5px;height:31.3px;background:#004c97;border:none"><span class="t" style="left:8.6px;top:7.5px;color:#fff;font-size:14.5px">1</span></div><div class="pb" style="top:9.7px;height:29.4px;left:109.8px;width:24.2px;border-top:1px solid #dfe2e6;border-bottom:1px solid #dfe2e6;"><span class="t" style="left:6.5px;top:5.3px;color:#0b4d96;font-size:14.5px">2</span></div><div class="pb" style="top:9.7px;height:29.4px;left:134px;width:37.7px;border-top:1px solid #dfe2e6;border-bottom:1px solid #dfe2e6;"><svg viewBox="0 0 12 12" style="position:absolute;left:11.5px;top:7.2px;width:14px;height:14px"><path d="M3.6 2.4v7.2L8.8 6z" fill="#0f1826"/></svg></div><div class="pb" style="top:9.7px;height:29.4px;left:171.7px;width:38px;border-radius:0 5px 5px 0;border-top:1px solid #dfe2e6;border-bottom:1px solid #dfe2e6;"><svg viewBox="0 0 12 12" style="position:absolute;left:11.5px;top:7.2px;width:14px;height:14px"><path d="M2.4 2.2v7.6L7.8 6zM8.3 2.2h1.5v7.6H8.3z" fill="#0f1826"/></svg></div><div style="position:absolute;left:227.5px;top:9.7px;height:29.4px;width:68px;background:#fff;border-radius:5px"><span class="t" style="left:8.2px;top:6.4px;font-size:14.5px">50</span><i style="position:absolute;left:48px;top:12.6px;width:0;height:0;border-left:4.2px solid transparent;border-right:4.2px solid transparent;border-top:6.4px solid #161c26"></i></div><span class="t" style="left:305px;top:16.2px;font-size:13px;transform:translateX(-0.80px) scaleX(0.9305);transform-origin:0 0;">items per page</span><span class="t" style="right:8px;top:16.2px;font-size:13px;transform:translateX(6.45px) scaleX(0.9283);transform-origin:0 0;">1 - 50 of 63 items</span></div>
</div>

<div id="menu"><div class="mi" style="top:4px"><span style="transform:translateX(1.11px) scaleX(1.0239);transform-origin:0 0;">Add</span></div><div class="mi" style="top:46px;background:#e9ecef"><span style="transform:translateX(1.11px) scaleX(0.9683);transform-origin:0 0;">Add Quick Search</span></div><div class="mi" style="top:88px"><span style="transform:translateX(1.01px) scaleX(0.9483);transform-origin:0 0;">Copy Search</span></div><div class="mi" style="top:130px"><span style="transform:translateX(0.54px) scaleX(0.9641);transform-origin:0 0;">Edit</span></div><div class="mi" style="top:172px"><span style="transform:translateX(1.01px) scaleX(0.9486);transform-origin:0 0;">Schedule Search</span></div><div class="mi" style="top:214px"><span style="transform:translateX(0.53px) scaleX(0.9803);transform-origin:0 0;">Delete</span></div><div class="mi" style="top:273px"><span style="transform:translateX(1.01px) scaleX(0.9402);transform-origin:0 0;">Start</span></div><div class="mi" style="top:315px"><span style="transform:translateX(1.01px) scaleX(0.9513);transform-origin:0 0;">Stop</span></div><div class="mi" style="top:357px"><span style="transform:translateX(0.62px) scaleX(0.8892);transform-origin:0 0;">Pause</span></div><div class="mi" style="top:399px"><span style="transform:translateX(0.55px) scaleX(0.9521);transform-origin:0 0;">Request Logs</span></div><div style="position:absolute;left:0;top:264px;width:193px;height:1px;background:#d9dce0"></div><svg viewBox="370.2 167.6 193 445" style="position:absolute;left:0;top:0;width:193px;height:445px"><path d="M395.9 192.1H421.1M408.8 180V205" stroke="#6f1b5b" stroke-width="3.8" stroke-linecap="round" fill="none"/><path d="M401.05 218.6H411.9L407.2 228.7L409.7 229.1L406 236.2L407.7 236.7L398.5 251.3L402 241.9L398.7 241.4L402.5 234.3L396.8 233.85Z" fill="none" stroke="#1a7dff" stroke-width="1.9" stroke-linejoin="miter"/><path d="M411.3 233.85H422.8M417.1 228.4V239.5" stroke="#1a7dff" stroke-width="1.8" fill="none"/><g fill="none" stroke="#c3c3c3" stroke-width="2.3" stroke-linejoin="miter"><path d="M402.4 263V260.2H418.2L424.7 267.6V288.6H415.5"/><path d="M418.2 260.2V267.6H424.7"/><path d="M391.1 264.7H407L413.8 272.3V293.8H391.1Z" fill="#fff"/><path d="M407 264.7V272.3H413.8"/></g><path d="M395.9 277H402M395.9 281.5H408.6M395.9 286H408.6M415 277H420.1M415 281.5H420.1" stroke="#c3c3c3" stroke-width="2" fill="none"/><path d="M412.6 307.8H396.5V331.2H420.3V314.8" fill="none" stroke="#c3c3c3" stroke-width="2.6" stroke-linejoin="round"/><path d="M417.6 306.3L421.6 310.1L406.6 325.2L402.3 326.2L402.9 321.8Z" fill="#fff" stroke="#c3c3c3" stroke-width="2.1" stroke-linejoin="round"/><path d="M402.9 321.8L406.6 325.2L402.3 326.2Z" fill="#c3c3c3"/><path d="M392.1 349.5a1.5 1.5 0 0 1 1.5 -1.5H416.4a1.5 1.5 0 0 1 1.5 1.5V358H415.6V355.4H394.5V368.4H402.5V370.7H393.6a1.5 1.5 0 0 1 -1.5 -1.5Z" fill="#c3c3c3"/><path d="M397.9 345.3V351M411.7 345.3V351" stroke="#fff" stroke-width="4.4" stroke-linecap="round"/><path d="M397.9 345.6V350.6M411.7 345.6V350.6" stroke="#c3c3c3" stroke-width="2.5" stroke-linecap="round"/><g fill="#c3c3c3"><circle cx="399" cy="358.4" r="1.9"/><circle cx="404.8" cy="358.4" r="1.9"/><circle cx="399" cy="364.5" r="1.9"/><circle cx="404.4" cy="364.5" r="1.9"/></g><circle cx="414.3" cy="367.2" r="11.6" fill="#fff"/><circle cx="414.3" cy="367.2" r="8.6" fill="#fff" stroke="#c3c3c3" stroke-width="3.6"/><path d="M415.4 362.6V368.3H410.2" fill="none" stroke="#c3c3c3" stroke-width="2.3"/><path d="M397.7 393.7L418.3 414.4M418.3 393.7L397.7 414.4" stroke="#c3c3c3" stroke-width="4.4" stroke-linecap="round"/><circle cx="408.4" cy="462.4" r="16.3" fill="#c3c3c3"/><path d="M404.4 454.2V470.7L417.1 462.5Z" fill="#fff"/><circle cx="408.1" cy="503.6" r="15.9" fill="#c3c3c3"/><path d="M403.6 497.4A8 8 0 1 0 412.2 497.4" fill="none" stroke="#fff" stroke-width="2.2" stroke-linecap="round"/><path d="M407.9 493.6V502.6" stroke="#fff" stroke-width="2.2" stroke-linecap="round"/><circle cx="408.1" cy="546.7" r="16" fill="#c3c3c3"/><path d="M400.9 538.9H406.2V555H400.9ZM410 538.9H415.4V555H410Z" fill="#fff"/><path d="M408.6 599.7H400.5a1.6 1.6 0 0 1 -1.6 -1.6V577.9a1.6 1.6 0 0 1 1.6 -1.6H413.3L418.7 581V596.7" fill="none" stroke="#c3c3c3" stroke-width="1.6"/><path d="M413 576V581.3H418.9Z" fill="#c3c3c3"/><rect x="393" y="579" width="17" height="6.9" fill="#c3c3c3"/><text x="394.3" y="584.8" font-family="Liberation Sans, sans-serif" font-size="6.2" font-weight="bold" fill="#fff" textLength="14.4" lengthAdjust="spacingAndGlyphs">LOG</text><path d="M411.3 592.3H413.2a1.4 1.4 0 0 1 1.4 1.4V599.5a1.4 1.4 0 0 1 -1.4 1.4H411.8" fill="none" stroke="#c3c3c3" stroke-width="1.7"/><path d="M413.5 599.6L416 598.2V601.8Z" fill="#c3c3c3"/></svg></div>
<div id="foot"></div>
</body>
</html>
